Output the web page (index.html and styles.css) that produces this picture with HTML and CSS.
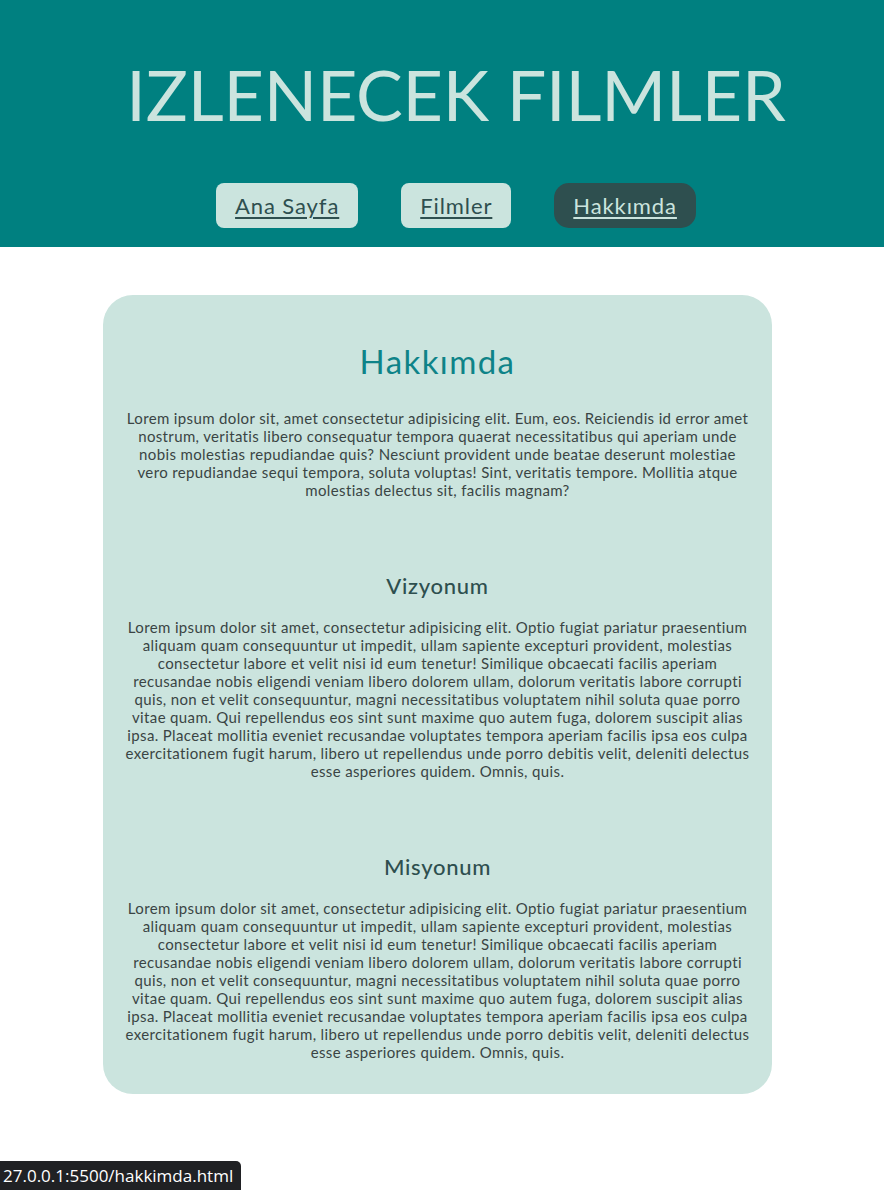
FILE: index.html
```html
<!DOCTYPE html>
<html lang="tr">
<head>
<meta charset="utf-8">
<title>Hakkımda</title>
<link rel="stylesheet" href="styles.css">
</head>
<body>
<header class="site-header">
  <h1 class="site-title">IZLENECEK FILMLER</h1>
  <nav class="nav">
    <a class="nav-link" href="#">Ana Sayfa</a>
    <a class="nav-link" href="#">Filmler</a>
    <a class="nav-link nav-link-active" href="#">Hakkımda</a>
  </nav>
</header>
<main class="main">
  <section class="card">
    <h2 class="card-title">Hakkımda</h2>
    <p class="card-text">Lorem ipsum dolor sit, amet consectetur adipisicing elit. Eum, eos. Reiciendis id error amet nostrum, veritatis libero consequatur tempora quaerat necessitatibus qui aperiam unde nobis molestias repudiandae quis? Nesciunt provident unde beatae deserunt molestiae vero repudiandae sequi tempora, soluta voluptas! Sint, veritatis tempore. Mollitia atque molestias delectus sit, facilis magnam?</p>
    <h3 class="card-subtitle">Vizyonum</h3>
    <p class="card-text">Lorem ipsum dolor sit amet, consectetur adipisicing elit. Optio fugiat pariatur praesentium aliquam quam consequuntur ut impedit, ullam sapiente excepturi provident, molestias consectetur labore et velit nisi id eum tenetur! Similique obcaecati facilis aperiam recusandae nobis eligendi veniam libero dolorem ullam, dolorum veritatis labore corrupti quis, non et velit consequuntur, magni necessitatibus voluptatem nihil soluta quae porro vitae quam. Qui repellendus eos sint sunt maxime quo autem fuga, dolorem suscipit alias ipsa. Placeat mollitia eveniet recusandae voluptates tempora aperiam facilis ipsa eos culpa exercitationem fugit harum, libero ut repellendus unde porro debitis velit, deleniti delectus esse asperiores quidem. Omnis, quis.</p>
    <h3 class="card-subtitle">Misyonum</h3>
    <p class="card-text">Lorem ipsum dolor sit amet, consectetur adipisicing elit. Optio fugiat pariatur praesentium aliquam quam consequuntur ut impedit, ullam sapiente excepturi provident, molestias consectetur labore et velit nisi id eum tenetur! Similique obcaecati facilis aperiam recusandae nobis eligendi veniam libero dolorem ullam, dolorum veritatis labore corrupti quis, non et velit consequuntur, magni necessitatibus voluptatem nihil soluta quae porro vitae quam. Qui repellendus eos sint sunt maxime quo autem fuga, dolorem suscipit alias ipsa. Placeat mollitia eveniet recusandae voluptates tempora aperiam facilis ipsa eos culpa exercitationem fugit harum, libero ut repellendus unde porro debitis velit, deleniti delectus esse asperiores quidem. Omnis, quis.</p>
  </section>
</main>
<div class="status-bar">27.0.0.1:5500/hakkimda.html</div>
</body>
</html>
```

FILE: styles.css
```css
* { box-sizing: border-box; }

html, body {
  margin: 0;
  padding: 0;
  background: #ffffff;
}

body {
  font-family: "Lato", "Open Sans", sans-serif;
  color: #2c3333;
  min-height: 1190px;
}

.site-header {
  background: #008080;
  padding: 52px 0 19px 28px;
  text-align: center;
}

.site-title {
  margin: 0;
  font-size: 70px;
  line-height: 84px;
  font-weight: 400;
  color: #cbe4de;
  letter-spacing: -0.2px;
}

.nav {
  display: flex;
  justify-content: center;
  gap: 43px;
  margin-top: 47px;
}

.nav-link {
  display: block;
  padding: 7px 19px;
  font-size: 22px;
  line-height: 31px;
  letter-spacing: 0.9px;
  border-radius: 8px;
  background: #cbe4de;
  color: #2e4f4f;
  text-decoration: underline;
  text-underline-offset: 3px;
  text-decoration-thickness: 2px;
}

.nav-link-active {
  background: #2e4f4f;
  color: #cbe4de;
  border-radius: 15px;
}

.main {
  padding: 48px 0 0 103px;
}

.card {
  width: 669px;
  background: #cbe4de;
  border-radius: 30px;
  padding: 46px 20px 33px;
  text-align: center;
}

.card-title {
  margin: 0;
  font-size: 33px;
  line-height: 40px;
  font-weight: 400;
  letter-spacing: 1.4px;
  color: #0e8388;
}

.card-text {
  margin: 28px 0 0;
  font-size: 15px;
  line-height: 18px;
  letter-spacing: 0.36px;
  color: #3a4444;
}

.card-subtitle {
  margin: 73px 0 0;
  font-size: 22px;
  line-height: 28px;
  font-weight: 500;
  letter-spacing: 0.7px;
  color: #2e4f4f;
}

.card-subtitle + .card-text {
  margin-top: 18px;
}

.status-bar {
  position: fixed;
  left: 0;
  bottom: 0;
  width: 241px;
  height: 29px;
  background: #202124;
  color: #ffffff;
  font-family: "Open Sans", "Noto Sans", sans-serif;
  font-size: 17px;
  line-height: 29px;
  padding-left: 3px;
  border-top-right-radius: 5px;
  white-space: nowrap;
  overflow: hidden;
}
```
